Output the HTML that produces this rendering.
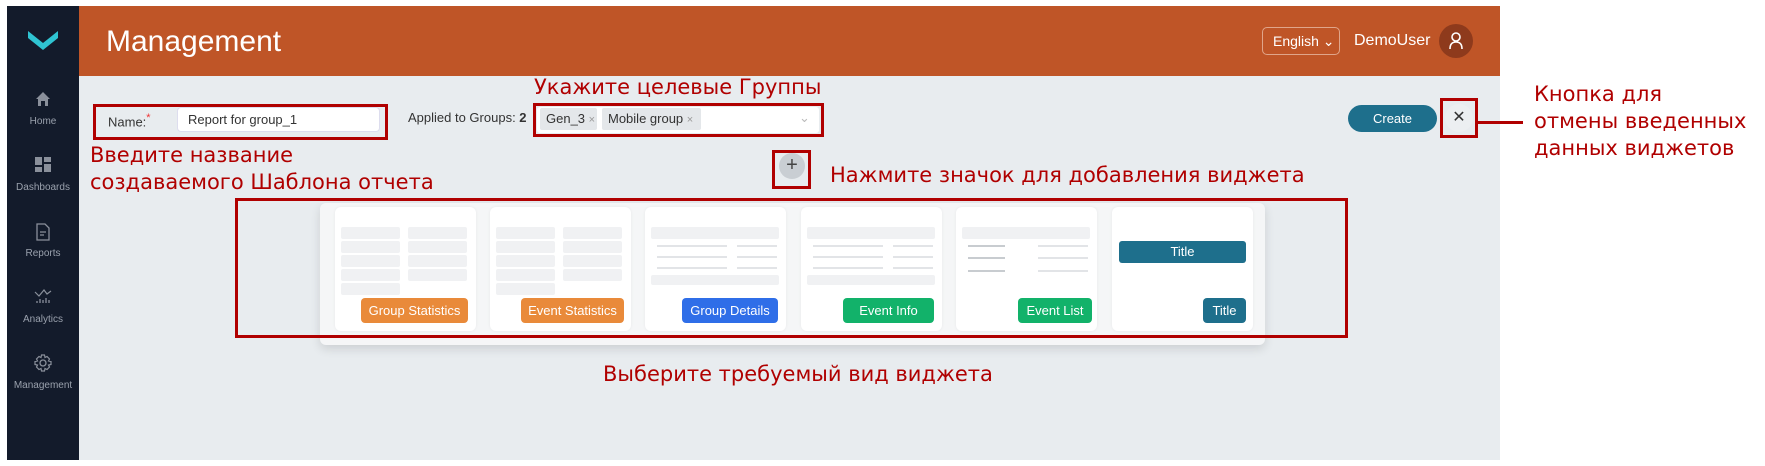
<!DOCTYPE html>
<html><head><meta charset="utf-8"><style>
*{margin:0;padding:0;box-sizing:border-box}
body{width:1765px;height:466px;background:#fff;position:relative;overflow:hidden;font-family:"Liberation Sans",sans-serif}
.a{position:absolute;white-space:nowrap}
.ann{position:absolute;color:#b00000;font-family:"DejaVu Sans","Liberation Sans",sans-serif;font-size:21px;line-height:27px;white-space:nowrap}
.rb{position:absolute;border:3px solid #b00000}
.side{left:7px;top:6px;width:72px;height:454px;background:#131b2b}
.si{position:absolute;left:0;width:72px;text-align:center;color:#9aa1ad;font-size:10px}
.card{position:absolute;top:207px;width:141px;height:124px;background:#fff;border-radius:6px;box-shadow:0 0 3px rgba(0,0,0,.06)}
.btn{position:absolute;bottom:8px;right:8px;height:25px;border-radius:4px;color:#fff;font-size:13px;line-height:25px;text-align:center}
.g{position:absolute;background:#f0f1f3;border-radius:2px}
.ln{position:absolute;height:2px;background:#e2e4e7}
</style></head><body>
<div class="a side"></div>
<svg class="a" style="left:26px;top:28px" width="34" height="24" viewBox="0 0 34 24"><path d="M2 3 L17 15 L32 3 L32 10 L17 22 L2 10Z" fill="#2fc4d2"/></svg>
<svg class="a" style="left:35px;top:91px" width="16" height="16" viewBox="0 0 16 16"><path d="M8 1 L15 8 H13 V15 H10 V10 H6 V15 H3 V8 H1Z" fill="#8a909b"/></svg>
<div class="si" style="left:7px;top:116px">Home</div>
<svg class="a" style="left:35px;top:157px" width="16" height="15"><rect x="0" y="0" width="7" height="8" fill="#8a909b"/><rect x="9" y="0" width="7" height="5" fill="#8a909b"/><rect x="0" y="10" width="7" height="5" fill="#8a909b"/><rect x="9" y="7" width="7" height="8" fill="#8a909b"/></svg>
<div class="si" style="left:7px;top:182px">Dashboards</div>
<svg class="a" style="left:36px;top:223px" width="14" height="18"><path d="M1 1 H9 L13 5 V17 H1Z M4 9 H10 M4 12 H8" fill="none" stroke="#8a909b" stroke-width="1.3"/></svg>
<div class="si" style="left:7px;top:248px">Reports</div>
<svg class="a" style="left:34px;top:286px" width="18" height="18"><path d="M1 6 L5 10 L10 4 L13 8 L17 5" fill="none" stroke="#8a909b" stroke-width="1.2"/><path d="M3 17 V15 M6 17 V13 M9 17 V14 M12 17 V12 M15 17 V14" stroke="#8a909b" stroke-width="1.3"/></svg>
<div class="si" style="left:7px;top:314px">Analytics</div>
<svg class="a" style="left:34px;top:354px" width="18" height="18" viewBox="0 0 18 18"><circle cx="9" cy="9" r="3" fill="none" stroke="#8a909b" stroke-width="1.3"/><path d="M7.5 1 H10.5 L11 3.5 L13 2.5 L15.5 5 L14.5 7 L17 7.5 V10.5 L14.5 11 L15.5 13 L13 15.5 L11 14.5 L10.5 17 H7.5 L7 14.5 L5 15.5 L2.5 13 L3.5 11 L1 10.5 V7.5 L3.5 7 L2.5 5 L5 2.5 L7 3.5Z" fill="none" stroke="#8a909b" stroke-width="1.2"/></svg>
<div class="si" style="left:7px;top:380px">Management</div>

<div class="a" style="left:79px;top:6px;width:1421px;height:70px;background:#bf5527"></div>
<div class="a" style="left:106px;top:25px;color:#fff;font-size:30px">Management</div>
<div class="a" style="left:1262px;top:27px;width:78px;height:28px;border:1px solid #e0a58a;border-radius:5px;color:#fff;font-size:14px;line-height:26px;padding-left:10px">English ⌄</div>
<div class="a" style="left:1354px;top:32px;color:#fff;font-size:16px">DemoUser</div>
<div class="a" style="left:1439px;top:24px;width:34px;height:34px;border-radius:50%;background:#8e3a1c"></div>
<svg class="a" style="left:1448px;top:32px" width="16" height="18"><circle cx="8" cy="5" r="4" fill="none" stroke="#fff" stroke-width="1.6"/><path d="M2 17 Q2 10 8 10 Q14 10 14 17" fill="none" stroke="#fff" stroke-width="1.6"/></svg>

<div class="a" style="left:79px;top:76px;width:1421px;height:384px;background:#e8ecef"></div>

<div class="rb" style="left:93px;top:104px;width:295px;height:36px"></div>
<div class="a" style="left:108px;top:112px;font-size:13px;color:#333">Name:<span style="color:#e33;vertical-align:super;font-size:11px">*</span></div>
<div class="a" style="left:177px;top:107px;width:203px;height:25px;background:#fff;border-radius:4px;border:1px solid #dde;font-size:13px;color:#333;line-height:23px;padding-left:10px">Report for group_1</div>
<div class="a" style="left:408px;top:110px;font-size:13px;color:#333">Applied to Groups: <b>2</b></div>
<div class="rb" style="left:533px;top:103px;width:291px;height:34px"></div>
<div class="a" style="left:537px;top:107px;width:282px;height:26px;background:#fff;border-radius:3px"></div>
<div class="a" style="left:540px;top:108px;width:57px;height:22px;background:#e4e7ea;border-radius:2px;font-size:13px;color:#333;line-height:22px;padding-left:6px">Gen_3 <span style="color:#999;font-size:11px">×</span></div>
<div class="a" style="left:602px;top:108px;width:99px;height:22px;background:#e4e7ea;border-radius:2px;font-size:13px;color:#333;line-height:22px;padding-left:6px">Mobile group <span style="color:#999;font-size:11px">×</span></div>
<div class="a" style="left:799px;top:110px;color:#bbb;font-size:13px">⌄</div>
<div class="ann" style="left:534px;top:74px">Укажите целевые Группы</div>
<div class="ann" style="left:90px;top:142px">Введите название<br>создаваемого Шаблона отчета</div>

<div class="rb" style="left:772px;top:150px;width:39px;height:39px"></div>
<div class="a" style="left:779px;top:153px;width:26px;height:26px;border-radius:50%;background:#c9ced3;text-align:center;line-height:25px;font-size:20px;color:#444">+</div>
<div class="ann" style="left:830px;top:162px">Нажмите значок для добавления виджета</div>

<div class="a" style="left:1348px;top:105px;width:89px;height:27px;background:#1e6f8c;border-radius:14px;color:#fff;font-size:13px;text-align:center;line-height:27px">Create</div>
<div class="rb" style="left:1440px;top:98px;width:38px;height:40px"></div>
<div class="a" style="left:1445px;top:104px;width:28px;height:28px;border-radius:50%;background:#eceff1;text-align:center;line-height:28px;font-size:16px;color:#333">✕</div>
<div class="a" style="left:1478px;top:121px;width:45px;height:3px;background:#b00000"></div>
<div class="ann" style="left:1534px;top:81px;line-height:27px">Кнопка для<br>отмены введенных<br>данных виджетов</div>

<div class="a" style="left:320px;top:203px;width:945px;height:142px;background:#f5f6f7;border-radius:6px;box-shadow:0 4px 10px rgba(0,0,0,.12)"></div>

<div class="card" style="left:335px">
<div class="g" style="left:6px;top:20px;width:59px;height:12px"></div><div class="g" style="left:73px;top:20px;width:59px;height:12px"></div>
<div class="g" style="left:6px;top:34px;width:59px;height:12px"></div><div class="g" style="left:73px;top:34px;width:59px;height:12px"></div>
<div class="g" style="left:6px;top:48px;width:59px;height:12px"></div><div class="g" style="left:73px;top:48px;width:59px;height:12px"></div>
<div class="g" style="left:6px;top:62px;width:59px;height:12px"></div><div class="g" style="left:73px;top:62px;width:59px;height:12px"></div>
<div class="g" style="left:6px;top:76px;width:59px;height:12px"></div>
<div class="btn" style="width:107px;background:#e98a3a;right:8px">Group Statistics</div></div>
<div class="card" style="left:490px">
<div class="g" style="left:6px;top:20px;width:59px;height:12px"></div><div class="g" style="left:73px;top:20px;width:59px;height:12px"></div>
<div class="g" style="left:6px;top:34px;width:59px;height:12px"></div><div class="g" style="left:73px;top:34px;width:59px;height:12px"></div>
<div class="g" style="left:6px;top:48px;width:59px;height:12px"></div><div class="g" style="left:73px;top:48px;width:59px;height:12px"></div>
<div class="g" style="left:6px;top:62px;width:59px;height:12px"></div><div class="g" style="left:73px;top:62px;width:59px;height:12px"></div>
<div class="g" style="left:6px;top:76px;width:59px;height:12px"></div>
<div class="btn" style="width:103px;background:#e98a3a;right:7px">Event Statistics</div></div>
<div class="card" style="left:645px">
<div class="g" style="left:6px;top:20px;width:128px;height:12px"></div>
<div class="ln" style="left:12px;top:38px;width:70px"></div><div class="ln" style="left:92px;top:38px;width:40px"></div>
<div class="ln" style="left:12px;top:49px;width:70px"></div><div class="ln" style="left:92px;top:49px;width:40px"></div>
<div class="ln" style="left:12px;top:60px;width:70px"></div><div class="ln" style="left:92px;top:60px;width:40px"></div>
<div class="g" style="left:6px;top:68px;width:128px;height:10px"></div>
<div class="btn" style="width:96px;background:#2f6ee8;right:8px">Group Details</div></div>
<div class="card" style="left:801px">
<div class="g" style="left:6px;top:20px;width:128px;height:12px"></div>
<div class="ln" style="left:12px;top:38px;width:70px"></div><div class="ln" style="left:92px;top:38px;width:40px"></div>
<div class="ln" style="left:12px;top:49px;width:70px"></div><div class="ln" style="left:92px;top:49px;width:40px"></div>
<div class="ln" style="left:12px;top:60px;width:70px"></div><div class="ln" style="left:92px;top:60px;width:40px"></div>
<div class="g" style="left:6px;top:68px;width:128px;height:10px"></div>
<div class="btn" style="width:91px;background:#12b26a;right:8px">Event Info</div></div>
<div class="card" style="left:956px">
<div class="g" style="left:6px;top:20px;width:128px;height:12px"></div>
<div class="ln" style="left:12px;top:38px;width:37px;background:#c8ccd0"></div><div class="ln" style="left:82px;top:38px;width:50px"></div>
<div class="ln" style="left:12px;top:50px;width:37px;background:#c8ccd0"></div><div class="ln" style="left:82px;top:50px;width:50px"></div>
<div class="ln" style="left:12px;top:63px;width:37px;background:#c8ccd0"></div><div class="ln" style="left:82px;top:63px;width:50px"></div>
<div class="btn" style="width:74px;background:#12b26a;right:5px">Event List</div></div>
<div class="card" style="left:1112px">
<div class="a" style="left:7px;top:34px;width:127px;height:22px;background:#1e6f8c;border-radius:3px;color:#fff;font-size:13px;text-align:center;line-height:22px">Title</div>
<div class="btn" style="width:43px;background:#1e6f8c;right:7px">Title</div></div>

<div class="rb" style="left:235px;top:198px;width:1113px;height:140px"></div>
<div class="ann" style="left:603px;top:361px">Выберите требуемый вид виджета</div>
</body></html>
